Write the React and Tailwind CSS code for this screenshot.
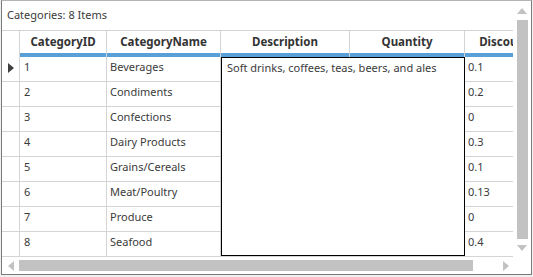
import React from 'react';

const rows = [
  { id: 1, name: 'Beverages', disc: '0.1' },
  { id: 2, name: 'Condiments', disc: '0.2' },
  { id: 3, name: 'Confections', disc: '0' },
  { id: 4, name: 'Dairy Products', disc: '0.3' },
  { id: 5, name: 'Grains/Cereals', disc: '0.1' },
  { id: 6, name: 'Meat/Poultry', disc: '0.13' },
  { id: 7, name: 'Produce', disc: '0' },
  { id: 8, name: 'Seafood', disc: '0.4' },
];

const cols = [
  { key: 'id', title: 'CategoryID', w: 'w-[87px]' },
  { key: 'name', title: 'CategoryName', w: 'w-[114px]' },
  { key: 'desc', title: 'Description', w: 'w-[129px]' },
  { key: 'qty', title: 'Quantity', w: 'w-[115px]' },
  { key: 'disc', title: 'Discount', w: 'w-[80px]' },
];

export default function App() {
  return (
    <div className="w-[533px] h-[277px] bg-[#f0f0f0] pl-px overflow-hidden font-['Noto_Sans',sans-serif] text-[11px] text-[#3b3b3b]">
      <div className="w-[531px] h-[275px] border border-[#7a7a7a] border-t-[#b4b4b4] bg-white flex flex-col">
        <div className="flex h-[256px]">
          {/* grid area */}
          <div className="w-[511px] flex flex-col overflow-hidden relative">
            <div className="h-[30px] shrink-0 flex items-center pl-[5px] pb-px border-b border-[#d4d4d4]">
              Categories: 8 Items
            </div>

            {/* column headers */}
            <div className="flex shrink-0 h-[26px]">
              <div className="w-[18px] shrink-0 border-r border-[#d4d4d4]" />
              {cols.map((c) => (
                <div key={c.key} className={`${c.w} shrink-0 flex flex-col border-r border-[#d4d4d4]`}>
                  <div className="h-[22px] flex items-center justify-center font-bold text-[11.5px] text-[#333] whitespace-nowrap overflow-hidden">
                    {c.title}
                  </div>
                  <div className="h-[4px] bg-[#5aa0d8]" />
                </div>
              ))}
            </div>

            {/* rows */}
            {rows.map((r) => (
              <div key={r.id} className="flex shrink-0 h-[25px] border-b border-[#d4d4d4]">
                <div className="w-[18px] shrink-0 border-r border-[#d4d4d4] flex items-center justify-center pb-[3px]">
                  {r.id === 1 && (
                    <svg width="6" height="10" viewBox="0 0 6 10">
                      <path d="M0 0 L6 5 L0 10 Z" fill="#3f3f3f" />
                    </svg>
                  )}
                </div>
                <div className="w-[87px] shrink-0 border-r border-[#d4d4d4] flex items-center pl-[4px] pb-[3px]">{r.id}</div>
                <div className="w-[114px] shrink-0 border-r border-[#d4d4d4] flex items-center pl-[3px] pb-[3px] whitespace-nowrap">{r.name}</div>
                <div className="w-[129px] shrink-0 border-r border-[#d4d4d4]" />
                <div className="w-[115px] shrink-0 border-r border-[#d4d4d4]" />
                <div className="w-[80px] shrink-0 flex items-center pl-[3px] pb-[3px]">{r.disc}</div>
              </div>
            ))}

            {/* multiline editor over Description */}
            <div className="absolute left-[219px] top-[56px] w-[244px] h-[199px] border border-black bg-white px-[5px] pt-[2px] whitespace-nowrap">
              Soft drinks, coffees, teas, beers, and ales
            </div>
          </div>

          {/* vertical scrollbar */}
          <div className="w-[18px] shrink-0 flex flex-col items-center pt-[7px]">
            <svg width="10" height="6" viewBox="0 0 10 6">
              <path d="M0 6 L5 0 L10 6 Z" fill="#c2c2c2" />
            </svg>
            <div className="w-[11px] h-[219px] mt-[6px] bg-[#c2c2c2]" />
            <svg width="10" height="6" viewBox="0 0 10 6" className="mt-[6px]">
              <path d="M0 0 L10 0 L5 6 Z" fill="#c2c2c2" />
            </svg>
          </div>
        </div>

        {/* horizontal scrollbar */}
        <div className="flex h-[17px] shrink-0">
          <div className="w-[511px] flex items-center">
            <div className="w-[17px] flex justify-center">
              <svg width="6" height="10" viewBox="0 0 6 10">
                <path d="M6 0 L0 5 L6 10 Z" fill="#c2c2c2" />
              </svg>
            </div>
            <div className="w-[454px] h-[11px] bg-[#c2c2c2]" />
            <div className="flex-1 flex justify-end pr-[4px]">
              <svg width="6" height="10" viewBox="0 0 6 10">
                <path d="M0 0 L6 5 L0 10 Z" fill="#c2c2c2" />
              </svg>
            </div>
          </div>
          <div className="w-[18px]" />
        </div>
      </div>
    </div>
  );
}
